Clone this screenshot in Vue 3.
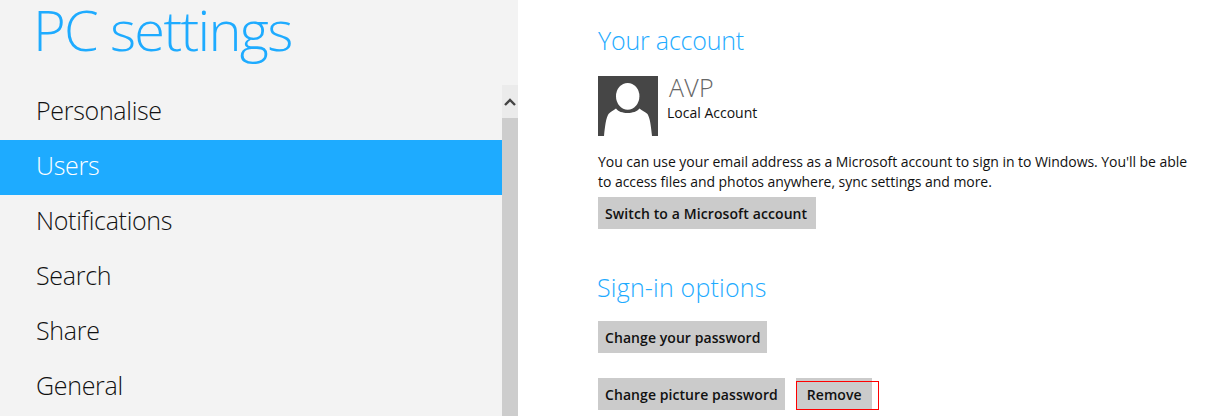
<script setup>
const items = ['Personalise', 'Users', 'Notifications', 'Search', 'Share', 'General']
</script>

<template>
  <div class="page">
    <aside class="side">
      <h1 class="title">PC settings</h1>
      <div class="navwrap">
        <nav class="nav">
          <div v-for="i in items" :key="i" class="item" :class="{ on: i === 'Users' }">{{ i }}</div>
        </nav>
        <div class="bar">
          <div class="arrow">
            <svg width="12" height="8" viewBox="0 0 12 8"><path d="M1 7 L6 2 L11 7" fill="none" stroke="#444" stroke-width="2.4"/></svg>
          </div>
          <div class="thumb"></div>
        </div>
      </div>
    </aside>
    <main class="main">
      <h2 class="h first">Your account</h2>
      <div class="acct">
        <svg class="pic" width="60" height="60" viewBox="0 0 60 60">
          <rect width="60" height="60" fill="#464646"/>
          <ellipse cx="29.700" cy="20.300" rx="11.700" ry="13.400" fill="#fff"/>
          <path d="M6 60 C7 50 8 42 10.500 38 C12.500 35.500 15 35 18 32.500 C22 38.500 37 38.500 41.500 32.500 C44 35 47 35.500 49.500 38 C52 42 53 50 54 60 Z" fill="#fff"/>
        </svg>
        <div class="who">
          <div class="name">AVP</div>
          <div class="local">Local Account</div>
        </div>
      </div>
      <p class="desc">You can use your email address as a Microsoft account to sign in to Windows. You'll be able<br>to access files and photos anywhere, sync settings and more.</p>
      <button class="btn">Switch to a Microsoft account</button>
      <h2 class="h second">Sign-in options</h2>
      <div class="row r1"><button class="btn">Change your password</button></div>
      <div class="row r2">
        <button class="btn">Change picture password</button>
        <span class="rm"><button class="btn">Remove</button><span class="mark"></span></span>
      </div>
    </main>
  </div>
</template>

<style>
html, body { margin: 0; background: #fff; overflow: hidden; }
</style>

<style scoped>
.page { display: flex; width: 1209px; height: 416px; overflow: hidden; font-family: "Open Sans", sans-serif; }
.side { width: 518px; flex: none; background: #f3f3f3; height: 416px; overflow: hidden; }
.title { margin: 0 0 0 33px; height: 85px; font-size: 56px; line-height: 58px; font-weight: 300; color: #1eabff; letter-spacing: -1.7px; white-space: nowrap; }
.navwrap { display: flex; }
.nav { width: 502px; }
.item { height: 55px; line-height: 51px; padding-left: 36px; font-size: 25px; font-weight: 300; color: #111; letter-spacing: -0.3px; }
.item.on { background: #1eabff; color: #fff; }
.bar { width: 16px; height: 331px; background: #cdcdcd; }
.arrow { height: 33px; background: #ebebeb; display: flex; align-items: center; justify-content: center; }
.main { padding-left: 80px; flex: 1; }
.h { margin: 0; font-size: 25px; font-weight: 300; color: #1eabff; line-height: 34px; letter-spacing: -0.2px; }
.first { padding-top: 23px; }
.acct { display: flex; margin-top: 19px; height: 60px; }
.pic { display: block; flex: none; }
.who { margin-left: 9px; }
.name { font-size: 25px; font-weight: 300; color: #666; line-height: 22px; padding-left: 2px; letter-spacing: 0.3px; }
.local { font-size: 14px; color: #111; line-height: 20px; margin-top: 5px; }
.desc { margin: 16px 0 0; font-size: 14px; line-height: 20px; color: #111; letter-spacing: -0.05px; white-space: nowrap; }
.btn { display: block; height: 32px; padding: 0 7px; border: 0; background: #cbcbcb; color: #111; font-family: "Open Sans", sans-serif; font-size: 14px; font-weight: 600; letter-spacing: 0.07px; white-space: nowrap; }
.desc + .btn { margin-top: 5px; padding-right: 9px; letter-spacing: 0.1px; }
.second { margin-top: 41px; letter-spacing: 0.2px; margin-left: -1px; }
.r1 { margin-top: 17px; }
.r2 { margin-top: 25px; display: flex; gap: 11px; }
.rm { position: relative; display: block; }
.rm .btn { padding: 0 11px; width: 76px; }
.mark { position: absolute; left: 0; top: 3px; width: 81px; height: 27px; border: 1px solid #f00; }
</style>
